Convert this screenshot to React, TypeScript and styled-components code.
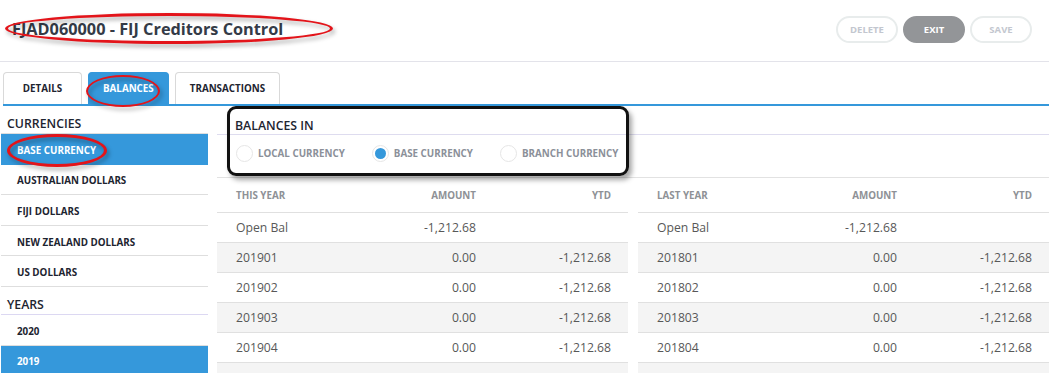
import React from 'react'
import styled, { createGlobalStyle } from 'styled-components'

const GlobalStyle = createGlobalStyle`
  html, body { margin: 0; padding: 0; background: #fff; }
  body { font-family: 'Open Sans', 'Liberation Sans', sans-serif; overflow: hidden; }
  * { box-sizing: border-box; }
`

const BLUE = '#3598db'

const Page = styled.div`
  position: relative;
  width: 1049px;
  height: 373px;
  overflow: hidden;
`

const Header = styled.header`
  height: 62px;
  display: flex;
  align-items: center;
  justify-content: space-between;
  padding: 0 17px 3px 12px;
  border-bottom: 1px solid #e3e3ea;
`

const Title = styled.h1`
  margin: 0;
  font-size: 16.3px;
  font-weight: 700;
  color: #343b47;
`

const Actions = styled.div`
  display: flex;
  gap: 5px;
`

const ActionButton = styled.button<{ $primary?: boolean }>`
  width: 62px;
  height: 27px;
  border-radius: 14px;
  font-family: 'Open Sans', sans-serif;
  font-size: 9.5px;
  font-weight: 700;
  border: 2px solid ${(p) => (p.$primary ? '#939598' : '#e8ecec')};
  background: ${(p) => (p.$primary ? '#939598' : '#fff')};
  color: ${(p) => (p.$primary ? '#fff' : '#c3c7cf')};
  padding: 0;
`

const TabBar = styled.nav`
  display: flex;
  gap: 6px;
  padding-top: 10px;
  margin-left: 3px;
  border-bottom: 2px solid ${BLUE};
`

const Tab = styled.div<{ $active?: boolean }>`
  min-width: 79px;
  height: 32px;
  padding: 0 14px;
  display: flex;
  align-items: center;
  justify-content: center;
  border: 1px solid ${(p) => (p.$active ? BLUE : '#d9d9d9')};
  border-bottom: none;
  border-radius: 4px 4px 0 0;
  background: ${(p) => (p.$active ? BLUE : '#fff')};
  color: ${(p) => (p.$active ? '#fff' : '#1d2430')};
  font-size: 9.8px;
  font-weight: 700;
`

const Body = styled.div`
  display: flex;
`

const Sidebar = styled.aside`
  width: 207px;
  margin-left: 1px;
  flex-shrink: 0;
`

const SideHeading = styled.div<{ $line: string }>`
  height: 28px;
  display: flex;
  align-items: flex-end;
  padding: 0 0 3px 6px;
  font-size: 12.3px;
  line-height: 1;
  font-weight: 600;
  color: #1d2430;
  border-bottom: 1px solid ${(p) => p.$line};
`

const SideItem = styled.div<{ $active?: boolean }>`
  height: 30.6px;
  display: flex;
  align-items: center;
  padding: 3px 0 0 16px;
  font-size: 9.8px;
  font-weight: 700;
  color: ${(p) => (p.$active ? '#fff' : '#1d2430')};
  background: ${(p) => (p.$active ? BLUE : '#fff')};
  border-bottom: 1px solid ${(p) => (p.$active ? BLUE : '#dedede')};
`

const Main = styled.main`
  flex: 1;
  margin-left: 9px;
`

const SectionHeading = styled.div`
  height: 29px;
  display: flex;
  align-items: flex-end;
  padding: 0 0 2px 18px;
  font-size: 12.3px;
  line-height: 1;
  font-weight: 600;
  color: #1d2430;
  border-bottom: 1px solid #dedcef;
`

const RadioRow = styled.div`
  height: 43px;
  display: flex;
  align-items: center;
  gap: 27px;
  padding: 0 0 5px 19px;
  border-bottom: 1px solid #e2e2e2;
`

const RadioOption = styled.label`
  display: flex;
  align-items: center;
  gap: 5px;
  font-size: 9.8px;
  font-weight: 700;
  color: #8b9099;
`

const RadioCircle = styled.span<{ $checked?: boolean }>`
  width: 17px;
  height: 17px;
  border-radius: 50%;
  border: 1px solid #e6e6e6;
  display: flex;
  align-items: center;
  justify-content: center;
  &::after {
    content: '';
    width: 11px;
    height: 11px;
    border-radius: 50%;
    background: ${(p) => (p.$checked ? BLUE : 'transparent')};
  }
`

const Tables = styled.div`
  display: grid;
  grid-template-columns: 411px 411px;
  gap: 10px;
`

const Row = styled.div<{ $head?: boolean; $shade?: boolean }>`
  display: grid;
  grid-template-columns: 1fr 135px 135px;
  align-items: center;
  height: ${(p) => (p.$head ? '35px' : '30px')};
  padding: 0 17px 0 19px;
  border-bottom: 1px solid #e0e0e0;
  background: ${(p) => (p.$shade ? '#f4f4f4' : '#fff')};
  font-size: ${(p) => (p.$head ? '9.8px' : '12.2px')};
  font-weight: ${(p) => (p.$head ? 700 : 400)};
  color: ${(p) => (p.$head ? '#8e9196' : '#585858')};
`

const Cell = styled.span<{ $right?: boolean }>`
  text-align: ${(p) => (p.$right ? 'right' : 'left')};
`

const Ring = styled.div<{ $x: number; $y: number; $w: number; $h: number; $stroke: number }>`
  position: absolute;
  left: ${(p) => p.$x}px;
  top: ${(p) => p.$y}px;
  width: ${(p) => p.$w}px;
  height: ${(p) => p.$h}px;
  border: ${(p) => p.$stroke}px solid #e3141a;
  border-radius: 50%;
  filter: drop-shadow(2px 3px 2px rgba(0, 0, 0, 0.35));
  pointer-events: none;
`

const Callout = styled.div`
  position: absolute;
  left: 227px;
  top: 106px;
  width: 402px;
  height: 70px;
  border: 3px solid #111;
  border-radius: 9px;
  box-shadow: 3px 4px 5px rgba(0, 0, 0, 0.35);
  pointer-events: none;
`

const currencies = ['BASE CURRENCY', 'AUSTRALIAN DOLLARS', 'FIJI DOLLARS', 'NEW ZEALAND DOLLARS', 'US DOLLARS']
const years = ['2020', '2019']

type Line = { period: string; amount: string; ytd: string }

const buildRows = (year: string): Line[] => [
  { period: 'Open Bal', amount: '-1,212.68', ytd: '' },
  ...[1, 2, 3, 4, 5].map((m) => ({ period: `${year}0${m}`, amount: '0.00', ytd: '-1,212.68' })),
]

function BalanceTable({ label, year }: { label: string; year: string }) {
  return (
    <div>
      <Row $head>
        <Cell>{label}</Cell>
        <Cell $right>AMOUNT</Cell>
        <Cell $right>YTD</Cell>
      </Row>
      {buildRows(year).map((r, i) => (
        <Row key={r.period} $shade={i % 2 === 1}>
          <Cell>{r.period}</Cell>
          <Cell $right>{r.amount}</Cell>
          <Cell $right>{r.ytd}</Cell>
        </Row>
      ))}
    </div>
  )
}

export default function App() {
  return (
    <Page>
      <GlobalStyle />
      <Header>
        <Title>FJAD060000 - FIJ Creditors Control</Title>
        <Actions>
          <ActionButton>DELETE</ActionButton>
          <ActionButton $primary>EXIT</ActionButton>
          <ActionButton>SAVE</ActionButton>
        </Actions>
      </Header>
      <TabBar>
        <Tab>DETAILS</Tab>
        <Tab $active>BALANCES</Tab>
        <Tab>TRANSACTIONS</Tab>
      </TabBar>
      <Body>
        <Sidebar>
          <SideHeading $line="#dedede">CURRENCIES</SideHeading>
          {currencies.map((c, i) => (
            <SideItem key={c} $active={i === 0}>{c}</SideItem>
          ))}
          <SideHeading $line="#dcd8f2">YEARS</SideHeading>
          {years.map((y) => (
            <SideItem key={y} $active={y === '2019'}>{y}</SideItem>
          ))}
        </Sidebar>
        <Main>
          <SectionHeading>BALANCES IN</SectionHeading>
          <RadioRow>
            <RadioOption><RadioCircle />LOCAL CURRENCY</RadioOption>
            <RadioOption><RadioCircle $checked />BASE CURRENCY</RadioOption>
            <RadioOption><RadioCircle />BRANCH CURRENCY</RadioOption>
          </RadioRow>
          <Tables>
            <BalanceTable label="THIS YEAR" year="2019" />
            <BalanceTable label="LAST YEAR" year="2018" />
          </Tables>
        </Main>
      </Body>
      <Ring $x={5} $y={13} $w={328} $h={31} $stroke={3} />
      <Ring $x={86} $y={75} $w={74} $h={32} $stroke={2} />
      <Ring $x={7} $y={134} $w={100} $h={33} $stroke={3} />
      <Callout />
    </Page>
  )
}
